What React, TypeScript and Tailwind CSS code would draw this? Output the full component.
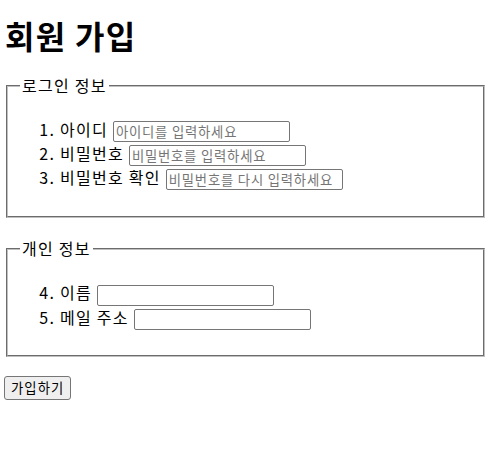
import React from 'react';

const inputClass =
    "inline-block align-middle w-[177px] h-[21px] border border-[#767676] rounded-[2px] px-[2px] text-[13.33px] leading-[17px] tracking-[0.06em] text-black placeholder:text-[#757575] bg-white";

export default function App() {
    return (
        <div className="min-h-[470px] bg-white px-[4px] text-black tracking-[0.08em] font-['Malgun_Gothic','Noto_Sans_CJK_KR',sans-serif]">
            <h1 className="pt-[13px] pl-[1px] text-[32px] font-bold leading-[44px]">회원 가입</h1>

            <form>
                {/* 로그인 정보 */}
                <fieldset className="mx-[2px] mt-[18px] border-2 border-[#c0c0c0] [border-style:groove] px-[12px] pb-[10px] pt-[5px]">
                    <legend className="px-[2px] text-[16px] leading-[21px]">로그인 정보</legend>
                    <ol className="list-decimal pl-[40px] mt-[17px] mb-[16px] text-[16px] leading-[23px]">
                        <li>
                            아이디 <input type="text" className={inputClass} placeholder="아이디를 입력하세요" />
                        </li>
                        <li>
                            비밀번호 <input type="password" className={inputClass} placeholder="비밀번호를 입력하세요" />
                        </li>
                        <li>
                            비밀번호 확인 <input type="password" className={inputClass} placeholder="비밀번호를 다시 입력하세요" />
                        </li>
                    </ol>
                </fieldset>

                {/* 개인 정보 */}
                <fieldset className="mx-[2px] mt-[20px] border-2 border-[#c0c0c0] [border-style:groove] px-[12px] pb-[10px] pt-[5px]">
                    <legend className="px-[2px] text-[16px] leading-[21px]">개인 정보</legend>
                    <ol start={4} className="list-decimal pl-[40px] mt-[17px] mb-[15px] text-[16px] leading-[23px]">
                        <li>
                            이름 <input type="text" className={inputClass} />
                        </li>
                        <li>
                            메일 주소 <input type="email" className={inputClass} />
                        </li>
                    </ol>
                </fieldset>

                <button
                    type="submit"
                    className="mt-[19px] h-[24px] rounded-[3px] border border-[#767676] bg-[#efefef] px-[6px] text-[13.33px] leading-[20px] tracking-[0.08em]"
                >
                    가입하기
                </button>
            </form>
        </div>
    );
}
